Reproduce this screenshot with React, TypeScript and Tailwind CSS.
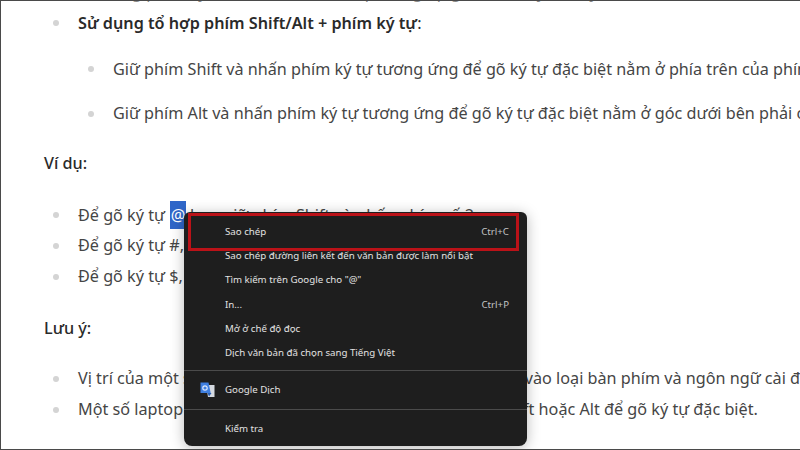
const Bullet = ({ x = "ml-[52px]" }: { x?: string }) => (
  <span className={`${x} mr-[19px] w-[6px] h-[6px] rounded-full bg-[#d4d4d4] shrink-0`} />
);

const Line = ({ h, children, sub = false }: { h: string; children: React.ReactNode; sub?: boolean }) => (
  <div className={`flex items-center whitespace-nowrap ${h}`}>
    <Bullet x={sub ? "ml-[87px]" : "ml-[52px]"} />
    {children}
  </div>
);

const Item = ({ label, hint }: { label: string; hint?: string }) => (
  <div className="flex items-center justify-between h-[24.1px] pl-[41px] pr-[18px]">
    <span>{label}</span>
    {hint && <span className="text-[#c4c4c4]">{hint}</span>}
  </div>
);

export default function App() {
  return (
    <div className="relative w-[800px] h-[450px] overflow-hidden bg-white border border-[#4a4a4a] border-r-0 text-[#454545] text-[16.2px]" style={{ fontFamily: '"Noto Sans", "Open Sans", sans-serif' }}>
      <div className="h-[2px] overflow-hidden whitespace-nowrap pl-[77px] leading-[24px] text-[#8a8a8a]">
        <div className="-mt-[21.5px]">Sử dụng phím ký tự đặc biệt trên bàn phím, giúp gõ nhanh ký tự này</div>
      </div>
      <Line h="h-[40px]"><span className="font-semibold text-[#2a2a2a]">Sử dụng tổ hợp phím Shift/Alt + phím ký tự<span className="font-normal">:</span></span></Line>
      <Line h="h-[44px] mt-[4px]" sub><span>Giữ phím Shift và nhấn phím ký tự tương ứng để gõ ký tự đặc biệt nằm ở phía trên của phím</span></Line>
      <Line h="h-[45px]" sub><span>Giữ phím Alt và nhấn phím ký tự tương ứng để gõ ký tự đặc biệt nằm ở góc dưới bên phải của phím</span></Line>
      <div className="h-[51px] flex items-center ml-[43px] font-medium text-[#2a2a2a] mt-[2px]">Ví dụ:</div>
      <Line h="h-[50px] mt-[1px]">
        <span>Để gõ ký tự <span className="bg-[#2f66c8] text-white py-[3px] ml-[1px] px-[0.5px]">@</span> bạn giữ phím Shift và nhấn phím số 2</span>
      </Line>
      <Line h="h-[31px] -mt-[10px]"><span>Để gõ ký tự #, bạn giữ phím Shift và nhấn phím số 3</span></Line>
      <Line h="h-[31px]"><span>Để gõ ký tự $, bạn giữ phím Shift và nhấn phím số 4</span></Line>
      <div className="h-[52px] flex items-center ml-[43px] font-medium text-[#2a2a2a] mt-[10px]">Lưu ý:</div>
      <Line h="h-[31px] mt-[9px]"><span>Vị trí của một số ký tự đặc biệt có thể sẽ thay đổi tùy thuộc vào loại bàn phím và ngôn ngữ cài đặt</span></Line>
      <Line h="h-[31px]"><span>Một số laptop có thể yêu cầu nhấn cả phím Fn cùng với Shift hoặc Alt để gõ ký tự đặc biệt.</span></Line>

      <div className="absolute left-[183px] top-[211px] w-[343px] h-[234px] rounded-b-[8px] rounded-t-[6px] bg-[#1e1e1e] text-[#e2e2e2] text-[9.7px] shadow-[0_2px_14px_rgba(0,0,0,0.28)] pt-[8.5px]">
        <Item label="Sao chép" hint="Ctrl+C" />
        <Item label="Sao chép đường liên kết đến văn bản được làm nổi bật" />
        <Item label={'Tìm kiếm trên Google cho "@"'} />
        <Item label="In..." hint="Ctrl+P" />
        <Item label="Mở ở chế độ đọc" />
        <Item label="Dịch văn bản đã chọn sang Tiếng Việt" />
        <div className="h-px bg-[#4b4b4b] mt-[5px]" />
        <div className="flex items-center h-[38px] pl-[16px]">
          <svg width="15" height="16" viewBox="0 0 15 16" className="mr-[10px]">
            <path d="M6 3h8.5v12H8z" fill="#d5d9e0" />
            <path d="M0.5 0.5h8l2.2 10.5H0.5z" fill="#3f7fe0" />
            <circle cx="5" cy="6" r="2.2" fill="none" stroke="#dbe7fb" strokeWidth="1.2" />
            <path d="M7.5 11h4l-2.5 3.5z" fill="#2a5db0" />
          </svg>
          <span>Google Dịch</span>
        </div>
        <div className="h-px bg-[#4b4b4b]" />
        <div className="flex items-center h-[38px] pl-[41px]">Kiểm tra</div>
        <div className="absolute left-[4px] top-[1px] w-[331px] h-[38px] border-[3px] border-[#bb1218]" />
      </div>
    </div>
  );
}
